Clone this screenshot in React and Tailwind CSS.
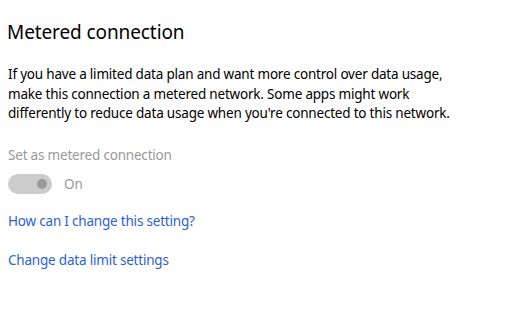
export default function App() {
  return (
    <div className="w-[519px] h-[314px] bg-white font-['Segoe_UI','Noto_Sans',sans-serif] text-[14px] text-black">
      <div className="pl-[7px] pt-[18px]">
        <h1 className="text-[19px] leading-[28px] tracking-[-0.1px]">Metered connection</h1>
        <p className="mt-[19px] pl-px leading-[19.5px] tracking-[-0.2px] text-[13.5px]">
          If you have a limited data plan and want more control over data usage,
          <br />
          make this connection a metered network. Some apps might work
          <br />
          differently to reduce data usage when you're connected to this network.
        </p>
        <div className="mt-[21px] pl-px text-[#999999] leading-[20px] tracking-[-0.2px] text-[13.5px]">Set as metered connection</div>
        <div className="mt-[9px] pl-px flex items-center">
          <div className="w-[44px] h-[20px] rounded-full bg-[#cccccc] flex items-center justify-end pr-[5px]">
            <div className="w-[10px] h-[10px] rounded-full bg-[#999999]" />
          </div>
          <span className="ml-[12px] text-[#999999] text-[13.5px]">On</span>
        </div>
        <div className="mt-[17px] pl-px leading-[20px] text-[#2b5fd9] tracking-[-0.2px] text-[13.5px]">How can I change this setting?</div>
        <div className="mt-[19px] pl-px leading-[20px] text-[#2b5fd9] tracking-[-0.2px] text-[13.5px]">Change data limit settings</div>
      </div>
    </div>
  );
}
